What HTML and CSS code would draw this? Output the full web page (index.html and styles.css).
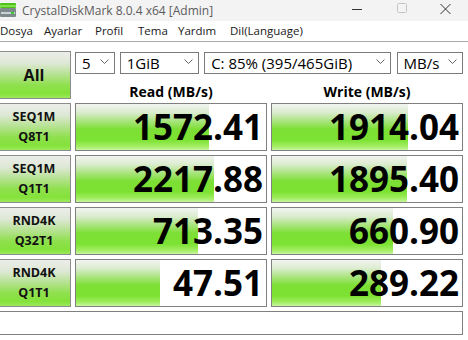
FILE: index.html
```html
<!DOCTYPE html>
<html lang="tr">
    <head>
        <meta charset="UTF-8">
        <title>CrystalDiskMark 8.0.4 x64 [Admin]</title>
        <link rel="stylesheet" href="styles.css">
    </head>
    <body>
        <div class="titlebar">
            <svg class="app-icon" width="16" height="16" viewBox="0 0 16 16">
                <rect x="0" y="1" width="16" height="5" rx="1" fill="#4cc21a"/>
                <rect x="0" y="3" width="16" height="2" fill="#7fe04a"/>
                <rect x="0" y="6" width="16" height="9" rx="1" fill="#7d8a8c"/>
                <rect x="1" y="10" width="14" height="2" fill="#c9d2d4"/>
                <rect x="11" y="10" width="3" height="2" fill="#3ccf2a"/>
            </svg>
            <span class="title">CrystalDiskMark 8.0.4 x64 [Admin]</span>
            <div class="controls">
                <svg class="ctl" width="45" height="21" viewBox="0 0 45 21"><path d="M17 9.5h10" stroke="#333" stroke-width="1"/></svg>
                <svg class="ctl" width="45" height="21" viewBox="0 0 45 21"><rect x="17.5" y="3.5" width="9" height="9" rx="1" fill="none" stroke="#c4c4c4"/></svg>
                <svg class="ctl" width="45" height="21" viewBox="0 0 45 21"><path d="M15.5 4l10 10M25.5 4l-10 10" stroke="#333" stroke-width="1"/></svg>
            </div>
        </div>
        <ul class="menu">
            <li class="m-file">Dosya</li>
            <li class="m-settings">Ayarlar</li>
            <li class="m-profile">Profil</li>
            <li class="m-theme">Tema</li>
            <li class="m-help">Yardım</li>
            <li>Dil(Language)</li>
        </ul>
        <main class="bench">
            <button class="all">All</button>
            <div class="options">
                <div class="selects">
                    <div class="select count"><span>5</span><svg width="9" height="5" viewBox="0 0 9 5"><path d="M0.5 0.5l4 4 4-4" fill="none" stroke="#666"/></svg></div>
                    <div class="select size"><span>1GiB</span><svg width="9" height="5" viewBox="0 0 9 5"><path d="M0.5 0.5l4 4 4-4" fill="none" stroke="#666"/></svg></div>
                    <div class="select drive"><span>C: 85% (395/465GiB)</span><svg width="9" height="5" viewBox="0 0 9 5"><path d="M0.5 0.5l4 4 4-4" fill="none" stroke="#666"/></svg></div>
                    <div class="select unit"><span>MB/s</span><svg width="9" height="5" viewBox="0 0 9 5"><path d="M0.5 0.5l4 4 4-4" fill="none" stroke="#666"/></svg></div>
                </div>
                <div class="heads">
                    <div>Read (MB/s)</div>
                    <div>Write (MB/s)</div>
                </div>
            </div>

            <button class="test"><span>SEQ1M</span><span>Q8T1</span></button>
            <div class="meter" style="--fill: 133px">1572.41</div>
            <div class="meter" style="--fill: 136px">1914.04</div>

            <button class="test"><span>SEQ1M</span><span>Q1T1</span></button>
            <div class="meter" style="--fill: 138px">2217.88</div>
            <div class="meter" style="--fill: 135px">1895.40</div>

            <button class="test"><span>RND4K</span><span>Q32T1</span></button>
            <div class="meter" style="--fill: 122px">713.35</div>
            <div class="meter" style="--fill: 121px">660.90</div>

            <button class="test"><span>RND4K</span><span>Q1T1</span></button>
            <div class="meter" style="--fill: 84px">47.51</div>
            <div class="meter" style="--fill: 109px">289.22</div>

            <div class="comment"></div>
        </main>
    </body>
</html>
```

FILE: styles.css
```css
body {
    background: #ffffff;
    color: #000000;
    font-family: "Open Sans", "Noto Sans", "DejaVu Sans", sans-serif;
    margin: 0;
    overflow: hidden;
}
.titlebar {
    align-items: center;
    background: #f3f3f3;
    display: flex;
    height: 21px;
}
.app-icon {
    flex: none;
    margin-top: -1px;
}
.title {
    color: #5c5c5c;
    font-size: 12px;
    margin-left: 6px;
    white-space: nowrap;
}
.controls {
    display: flex;
    flex: none;
    margin-left: auto;
    margin-right: -2px;
}
.ctl {
    display: block;
    flex: none;
}
.menu {
    border-bottom: 1px solid #a8a8a8;
    display: flex;
    font-size: 11.5px;
    height: 20px;
    line-height: 20px;
    list-style: none;
    margin: 0;
    padding: 0;
}
.menu li {
    color: #1a1a1a;
    flex: none;
    white-space: nowrap;
}
.m-file {
    width: 44px;
}
.m-settings {
    width: 51px;
}
.m-profile {
    width: 43px;
}
.m-theme {
    width: 40px;
}
.m-help {
    width: 52px;
}
.bench {
    display: grid;
    gap: 4px;
    grid-template-columns: 74px 192px 192px;
    grid-template-rows: 48px repeat(4, 48px) 24px;
    margin-left: -3px;
    padding-top: 9px;
}
button {
    font-family: inherit;
    margin: 0;
    padding: 0;
}
.all,
.test {
    background: linear-gradient(to bottom, #eceeea 0%, #dde8d4 25%, #b4e28e 50%, #8fe04e 72%, #84e23a 90%, #9cea5c 100%);
    border: 1px solid #8c8c8c;
    border-radius: 0;
    color: #111111;
    font-weight: bold;
}
.all {
    font-size: 16px;
}
.test {
    display: flex;
    flex-direction: column;
    font-size: 12.5px;
    justify-content: center;
    line-height: 20px;
}
.options {
    display: flex;
    flex-direction: column;
    grid-column: 2 / 4;
}
.selects {
    display: flex;
    gap: 5px;
    height: 24px;
    margin-top: 1px;
}
.select {
    align-items: center;
    border: 1px solid #7a7a7a;
    box-sizing: border-box;
    display: flex;
    font-size: 15px;
    justify-content: space-between;
    padding: 0 5px 0 6px;
}
.select svg {
    margin-top: -3px;
}
.count {
    width: 40px;
}
.size {
    width: 80px;
}
.drive {
    width: 188px;
}
.unit {
    margin-left: 1px;
    width: 67px;
}
.heads {
    display: flex;
    gap: 4px;
    font-size: 14px;
    font-weight: bold;
    margin-top: 8px;
}
.heads div {
    text-align: center;
    width: 192px;
}
.meter {
    background: linear-gradient(to bottom, #f2f4f0 0%, #dcecd0 18%, #a6e47a 38%, #7ddf34 55%, #7ce232 78%, #a2ee62 92%, #c8f6a0 100%) no-repeat, #ffffff;
    background-size: var(--fill) 100%;
    border: 1px solid #808080;
    font-size: 35px;
    font-weight: bold;
    line-height: 46px;
    padding-right: 3px;
    text-align: right;
}
.comment {
    border: 1px solid #808080;
    grid-column: 1 / 4;
}
```
